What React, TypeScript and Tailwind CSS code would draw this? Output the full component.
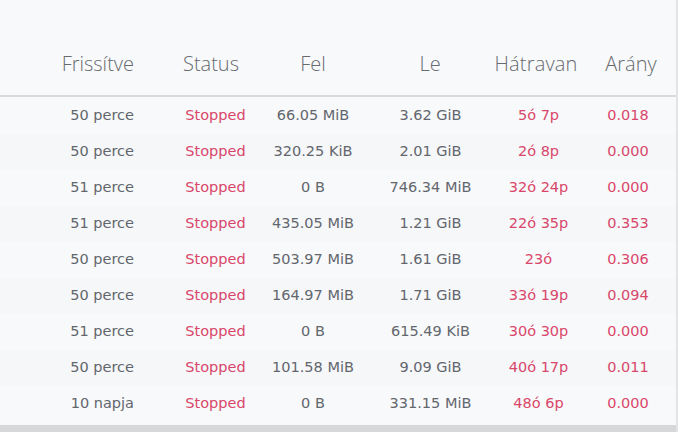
import React from "react";

type Row = {
  updated: string;
  status: string;
  up: string;
  down: string;
  left: string;
  ratio: string;
};

const ROWS: Row[] = [
  { updated: "50 perce", status: "Stopped", up: "66.05 MiB", down: "3.62 GiB", left: "5ó 7p", ratio: "0.018" },
  { updated: "50 perce", status: "Stopped", up: "320.25 KiB", down: "2.01 GiB", left: "2ó 8p", ratio: "0.000" },
  { updated: "51 perce", status: "Stopped", up: "0 B", down: "746.34 MiB", left: "32ó 24p", ratio: "0.000" },
  { updated: "51 perce", status: "Stopped", up: "435.05 MiB", down: "1.21 GiB", left: "22ó 35p", ratio: "0.353" },
  { updated: "50 perce", status: "Stopped", up: "503.97 MiB", down: "1.61 GiB", left: "23ó", ratio: "0.306" },
  { updated: "50 perce", status: "Stopped", up: "164.97 MiB", down: "1.71 GiB", left: "33ó 19p", ratio: "0.094" },
  { updated: "51 perce", status: "Stopped", up: "0 B", down: "615.49 KiB", left: "30ó 30p", ratio: "0.000" },
  { updated: "50 perce", status: "Stopped", up: "101.58 MiB", down: "9.09 GiB", left: "40ó 17p", ratio: "0.011" },
  { updated: "10 napja", status: "Stopped", up: "0 B", down: "331.15 MiB", left: "48ó 6p", ratio: "0.000" },
];

// each cell is 80px wide and centred; margins push it to the column centre
const cell = "w-[80px] shrink-0 flex justify-center whitespace-nowrap";

export default function App() {
  return (
    <div className="w-[678px] h-[432px] overflow-hidden bg-[#f8f9fa] border-r-2 border-[#e3e4e6] flex flex-col">
      {/* Header */}
      <div
        className="h-[97px] shrink-0 flex items-end pb-[17px] border-b-2 border-[#d8d9db] text-[20px] leading-[28px] font-light text-[#676a6f]"
        style={{ fontFamily: '"Open Sans", sans-serif' }}
      >
        <div className="w-[134px] shrink-0 text-right whitespace-nowrap">Frissítve</div>
        <div className={`${cell} ml-[37px]`}>Status</div>
        <div className={`${cell} ml-[22px]`}>Fel</div>
        <div className={`${cell} ml-[37px]`}>Le</div>
        <div className={`${cell} ml-[26px] tracking-[0.2px]`}>Hátravan</div>
        <div className={`${cell} ml-[15px]`}>Arány</div>
      </div>

      {/* Rows */}
      <div
        className="flex-1 flex flex-col pt-px text-[14.5px] text-[#62666d]"
        style={{ fontFamily: '"DejaVu Sans", Verdana, sans-serif' }}
      >
        {ROWS.map((r, i) => (
          <div
            key={i}
            className={`h-[36px] shrink-0 flex items-center ${i % 2 === 0 ? "bg-[#f8f9fa]" : "bg-[#f6f7f9]"}`}
          >
            <div className="w-[134px] shrink-0 text-right whitespace-nowrap">{r.updated}</div>
            <div className={`${cell} ml-[41.5px] text-[#d8476b]`}>{r.status}</div>
            <div className={`${cell} ml-[17.5px]`}>{r.up}</div>
            <div className={`${cell} ml-[37.5px]`}>{r.down}</div>
            <div className={`${cell} ml-[28px] text-[#d8476b]`}>{r.left}</div>
            <div className={`${cell} ml-[9.5px] text-[#d8476b]`}>{r.ratio}</div>
          </div>
        ))}
      </div>

      {/* bottom bar */}
      <div className="h-[7px] shrink-0 bg-[#d7d8da]" />
    </div>
  );
}
